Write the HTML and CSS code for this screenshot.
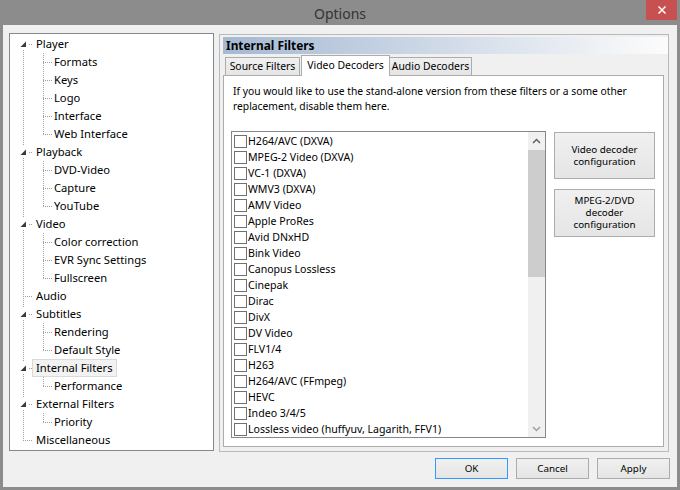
FILE: index.html
```html
<!DOCTYPE html>
<html lang="en">
<head>
    <meta charset="UTF-8" />
    <title>Options</title>
    <link rel="stylesheet" href="styles.css">
</head>
<body>
<div class="window">
  <div class="titlebar">
    <span class="title">Options</span>
    <span class="close">
      <svg width="10" height="10" viewBox="0 0 10 10"><path d="M1.5 1.5l7 7M8.5 1.5l-7 7" stroke="#fff" stroke-width="1.5"/></svg>
    </span>
  </div>

  <div class="client">
    <div class="main">
      <!-- page tree -->
      <div class="tree">
        <ul class="roots">
          <li>
            <div class="row"><span class="twisty"><svg width="11" height="12" viewBox="0 0 11 12"><path d="M8 3.5V9H2.5z" fill="#3a3a3a"/></svg></span><span class="label">Player</span></div>
            <ul class="kids">
              <li><div class="row"><span class="label">Formats</span></div></li>
              <li><div class="row"><span class="label">Keys</span></div></li>
              <li><div class="row"><span class="label">Logo</span></div></li>
              <li><div class="row"><span class="label">Interface</span></div></li>
              <li><div class="row"><span class="label">Web Interface</span></div></li>
            </ul>
          </li>
          <li>
            <div class="row"><span class="twisty"><svg width="11" height="12" viewBox="0 0 11 12"><path d="M8 3.5V9H2.5z" fill="#3a3a3a"/></svg></span><span class="label">Playback</span></div>
            <ul class="kids">
              <li><div class="row"><span class="label">DVD-Video</span></div></li>
              <li><div class="row"><span class="label">Capture</span></div></li>
              <li><div class="row"><span class="label">YouTube</span></div></li>
            </ul>
          </li>
          <li>
            <div class="row"><span class="twisty"><svg width="11" height="12" viewBox="0 0 11 12"><path d="M8 3.5V9H2.5z" fill="#3a3a3a"/></svg></span><span class="label">Video</span></div>
            <ul class="kids">
              <li><div class="row"><span class="label">Color correction</span></div></li>
              <li><div class="row"><span class="label">EVR Sync Settings</span></div></li>
              <li><div class="row"><span class="label">Fullscreen</span></div></li>
            </ul>
          </li>
          <li>
            <div class="row leaf"><span class="label">Audio</span></div>
          </li>
          <li>
            <div class="row"><span class="twisty"><svg width="11" height="12" viewBox="0 0 11 12"><path d="M8 3.5V9H2.5z" fill="#3a3a3a"/></svg></span><span class="label">Subtitles</span></div>
            <ul class="kids">
              <li><div class="row"><span class="label">Rendering</span></div></li>
              <li><div class="row"><span class="label">Default Style</span></div></li>
            </ul>
          </li>
          <li>
            <div class="row"><span class="twisty"><svg width="11" height="12" viewBox="0 0 11 12"><path d="M8 3.5V9H2.5z" fill="#3a3a3a"/></svg></span><span class="label selected">Internal Filters</span></div>
            <ul class="kids">
              <li><div class="row"><span class="label">Performance</span></div></li>
            </ul>
          </li>
          <li>
            <div class="row"><span class="twisty"><svg width="11" height="12" viewBox="0 0 11 12"><path d="M8 3.5V9H2.5z" fill="#3a3a3a"/></svg></span><span class="label">External Filters</span></div>
            <ul class="kids">
              <li><div class="row"><span class="label">Priority</span></div></li>
            </ul>
          </li>
          <li>
            <div class="row leaf"><span class="label">Miscellaneous</span></div>
          </li>
        </ul>
      </div>

      <!-- property page -->
      <div class="page">
        <div class="page-head">Internal Filters</div>
        <div class="tabs">
          <div class="tab tab-source">Source Filters</div>
          <div class="tab tab-video active">Video Decoders</div>
          <div class="tab tab-audio">Audio Decoders</div>
        </div>
        <div class="tab-panel">
          <p class="desc">If you would like to use the stand-alone version from these filters or a some other<br>replacement, disable them here.</p>
          <div class="panel-row">
            <div class="list">
              <div class="items">
                <div class="item"><span class="check"></span>H264/AVC (DXVA)</div>
                <div class="item"><span class="check"></span>MPEG-2 Video (DXVA)</div>
                <div class="item"><span class="check"></span>VC-1 (DXVA)</div>
                <div class="item"><span class="check"></span>WMV3 (DXVA)</div>
                <div class="item"><span class="check"></span>AMV Video</div>
                <div class="item"><span class="check"></span>Apple ProRes</div>
                <div class="item"><span class="check"></span>Avid DNxHD</div>
                <div class="item"><span class="check"></span>Bink Video</div>
                <div class="item"><span class="check"></span>Canopus Lossless</div>
                <div class="item"><span class="check"></span>Cinepak</div>
                <div class="item"><span class="check"></span>Dirac</div>
                <div class="item"><span class="check"></span>DivX</div>
                <div class="item"><span class="check"></span>DV Video</div>
                <div class="item"><span class="check"></span>FLV1/4</div>
                <div class="item"><span class="check"></span>H263</div>
                <div class="item"><span class="check"></span>H264/AVC (FFmpeg)</div>
                <div class="item"><span class="check"></span>HEVC</div>
                <div class="item"><span class="check"></span>Indeo 3/4/5</div>
                <div class="item"><span class="check"></span>Lossless video (huffyuv, Lagarith, FFV1)</div>
              </div>
              <div class="vscroll">
                <div class="sb-btn"><svg width="9" height="6" viewBox="0 0 9 6"><path d="M1 5l3.5-3.5L8 5" fill="none" stroke="#606060" stroke-width="1.5"/></svg></div>
                <div class="sb-thumb"></div>
                <div class="sb-track"></div>
                <div class="sb-btn"><svg width="9" height="6" viewBox="0 0 9 6"><path d="M1 1l3.5 3.5L8 1" fill="none" stroke="#a0a0a0" stroke-width="1.5"/></svg></div>
              </div>
            </div>
            <div class="side">
              <button class="btn side-btn">Video decoder<br>configuration</button>
              <button class="btn side-btn tall">MPEG-2/DVD<br>decoder<br>configuration</button>
            </div>
          </div>
        </div>
      </div>
    </div>

    <div class="actions">
      <button class="btn default">OK</button>
      <button class="btn">Cancel</button>
      <button class="btn">Apply</button>
    </div>
  </div>
</div>
</body>
</html>
```

FILE: styles.css
```css
* {
  margin: 0;
  padding: 0;
  box-sizing: border-box;
}

body {
  font-family: "Noto Sans", sans-serif;
  font-size: 11.2px;
  color: #000;
  background: #8c8c8c;
  width: 680px;
  height: 490px;
  overflow: hidden;
}

/* window frame */
.window {
  width: 680px;
  height: 490px;
  background: #8c8c8c;
  padding: 0 3px 3px;
  display: flex;
  flex-direction: column;
}

.titlebar {
  height: 25px;
  flex: none;
  display: grid;
  grid-template-columns: 1fr auto 1fr;
}

.title {
  grid-column: 2;
  font-size: 14px;
  line-height: 27px;
  color: #333;
}

.close {
  grid-column: 3;
  justify-self: end;
  width: 31px;
  height: 20px;
  background: #c75050;
  display: flex;
  align-items: center;
  justify-content: center;
}

.client {
  flex: 1;
  background: #f0f0f0;
  padding: 8px 7px 8px 6px;
  display: flex;
  flex-direction: column;
}

.main {
  display: flex;
  gap: 5px;
  height: 419px;
  margin-right: 1px;
}

/* tree view */
.tree {
  flex: none;
  width: 205px;
  height: 418px;
  border: 1px solid #828790;
  background: #fff;
  padding-top: 1px;
}

.roots,
.kids {
  list-style: none;
}

.roots {
  background: repeating-linear-gradient(to bottom, #a0a0a0 0 1px, transparent 1px 2px) 13px 9px / 1px calc(100% - 18px) no-repeat;
}

.kids {
  background: repeating-linear-gradient(to bottom, #a0a0a0 0 1px, transparent 1px 2px) 33px 0 / 1px calc(100% - 9px) no-repeat;
}

.row {
  height: 18px;
  display: flex;
  align-items: center;
  padding-left: 8px;
  background: repeating-linear-gradient(to right, #a0a0a0 0 1px, transparent 1px 2px) 13px 9px / 9px 1px no-repeat;
}

.row.leaf {
  padding-left: 22px;
}

.kids .row {
  padding-left: 40px;
  background-position: 33px 9px;
}

.twisty {
  width: 11px;
  height: 12px;
  background: #fff;
  margin-right: 3px;
  display: flex;
}

.label {
  height: 18px;
  line-height: 16px;
  padding: 0 3px;
  border: 1px solid transparent;
  white-space: nowrap;
}

.label.selected {
  background: #f2f2f2;
  border-color: #dadada;
}

/* property page */
.page {
  flex: 1;
  margin-top: 1px;
  height: 418px;
  border: 1px solid #b9b9b9;
  padding: 2px 0 4px 3px;
  display: flex;
  flex-direction: column;
}

.page-head {
  height: 17px;
  line-height: 17px;
  padding-left: 3px;
  font-size: 11.9px;
  font-weight: bold;
  background: linear-gradient(to right, #a5b9d3, #fcfcfc);
}

.tabs {
  display: flex;
  align-items: flex-end;
  height: 20px;
  margin-top: 1px;
  padding-left: 2px;
  font-size: 10.4px;
}

.tab {
  height: 18px;
  line-height: 17px;
  text-align: center;
  border: 1px solid #acacac;
  border-bottom: none;
  background: linear-gradient(#f0f0f0, #e5e5e5);
  white-space: nowrap;
}

.tab-source { width: 75px; }
.tab-video { width: 89px; margin-left: 1px; }
.tab-audio { width: 83px; margin-left: -1px; }

.tab.active {
  height: 21px;
  line-height: 18px;
  margin-bottom: -1px;
  background: #fff;
  position: relative;
  z-index: 1;
}

.tab-panel {
  flex: 1;
  margin-right: 4px;
  border: 1px solid #acacac;
  background: #fff;
  padding: 8px 8px 0 7px;
}

.desc {
  margin: 0 0 17px 2px;
  font-size: 10.3px;
  line-height: 15px;
  white-space: nowrap;
}

.panel-row {
  display: flex;
  gap: 8px;
  align-items: flex-start;
}

/* checked list box */
.list {
  width: 315px;
  height: 307px;
  border: 1px solid #828790;
  display: flex;
}

.items {
  flex: 1;
  padding-top: 1px;
  overflow: hidden;
  font-size: 10.6px;
}

.item {
  height: 16px;
  display: flex;
  align-items: center;
  white-space: nowrap;
}

.check {
  flex: none;
  width: 13px;
  height: 13px;
  border: 1px solid #707070;
  background: #fff;
  margin: 1px 1px 0 2px;
}

.vscroll {
  width: 17px;
  display: flex;
  flex-direction: column;
  background: #f0f0f0;
}

.sb-btn {
  height: 17px;
  display: flex;
  align-items: center;
  justify-content: center;
}

.sb-thumb {
  height: 127px;
  margin-top: 1px;
  background: #cdcdcd;
}

.sb-track {
  flex: 1;
}

/* buttons */
.btn {
  font-family: inherit;
  font-size: 9.8px;
  color: #000;
  border: 1px solid #acacac;
  background: linear-gradient(#f0f0f0, #e5e5e5);
}

.side {
  display: flex;
  flex-direction: column;
  gap: 10px;
  padding-top: 1px;
}

.side-btn {
  width: 101px;
  height: 47px;
  line-height: 12px;
}

.side-btn.tall {
  height: 48px;
}

.actions {
  display: flex;
  justify-content: flex-end;
  gap: 8px;
  margin-top: 6px;
}

.actions .btn {
  width: 73px;
  height: 21px;
}

.btn.default {
  border-color: #3399ff;
}
```
